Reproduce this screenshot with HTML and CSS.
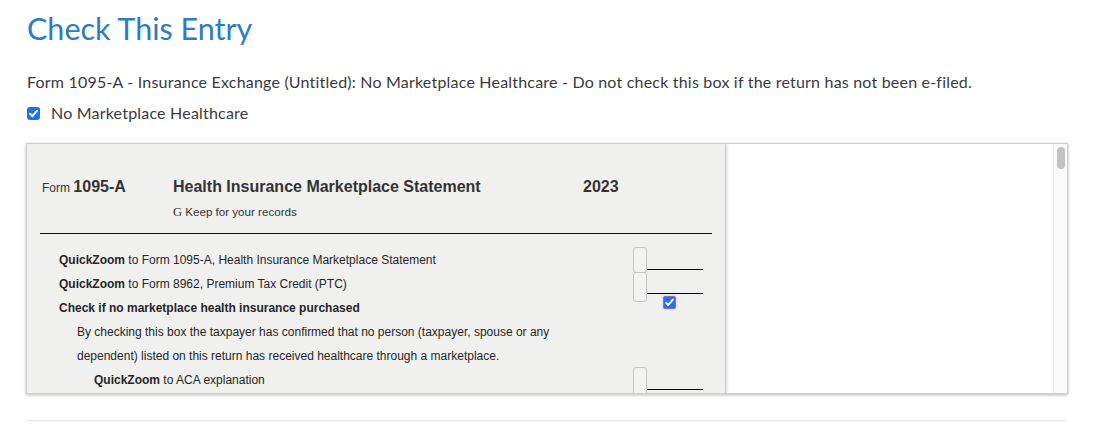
FILE: index.html
```html
<!DOCTYPE html>
<html>
<head>
<meta charset="utf-8">
<link rel="stylesheet" href="styles.css">
</head>
<body>
<div class="page">
  <h1 class="title">Check This Entry</h1>
  <p class="desc">Form 1095-A - Insurance Exchange (Untitled): No Marketplace Healthcare - Do not check this box if the return has not been e-filed.</p>
  <label class="check-line">
    <span class="cb"><svg viewBox="0 0 13 13" width="13" height="13"><path d="M3 6.8 L5.4 9.2 L10 3.8" fill="none" stroke="#fff" stroke-width="2" stroke-linecap="round" stroke-linejoin="round"/></svg></span>
    <span>No Marketplace Healthcare</span>
  </label>

  <div class="panel">
    <div class="form-pane">
      <div class="form-head">
        <div class="form-id"><span class="form-word">Form</span> <b>1095-A</b></div>
        <div class="form-title">
          <div class="form-name">Health Insurance Marketplace Statement</div>
          <div class="form-keep"><span class="g">G</span> Keep for your records</div>
        </div>
        <div class="form-year">2023</div>
      </div>
      <div class="rule"></div>
      <div class="rows">
        <div class="row">
          <div class="label"><b>QuickZoom</b> to Form 1095-A, Health Insurance Marketplace Statement</div>
          <div class="field"><span class="box box-a"></span><span class="line"></span></div>
        </div>
        <div class="row">
          <div class="label"><b>QuickZoom</b> to Form 8962, Premium Tax Credit (PTC)</div>
          <div class="field"><span class="box box-b"></span><span class="line"></span></div>
        </div>
        <div class="row">
          <div class="label"><b>Check if no marketplace health insurance purchased</b></div>
          <div class="field"><span class="fcb"><svg viewBox="0 0 13 13" width="11" height="11"><path d="M2.5 7 L5 9.5 L10.5 3" fill="none" stroke="#fff" stroke-width="2.2" stroke-linecap="round" stroke-linejoin="round"/></svg></span></div>
        </div>
        <div class="row">
          <div class="label indent1">By checking this box the taxpayer has confirmed that no person (taxpayer, spouse or any</div>
          <div class="field"></div>
        </div>
        <div class="row">
          <div class="label indent1">dependent) listed on this return has received healthcare through a marketplace.</div>
          <div class="field"></div>
        </div>
        <div class="row">
          <div class="label indent2"><b>QuickZoom</b> to ACA explanation</div>
          <div class="field"><span class="box box-c"></span><span class="line"></span></div>
        </div>
      </div>
    </div>
    <div class="side-pane">
      <div class="side-content"></div>
      <div class="scrollbar"><div class="thumb"></div></div>
    </div>
  </div>
  <div class="bottom-rule"></div>
</div>
</body>
</html>
```

FILE: styles.css
```css
* { box-sizing: border-box; }
html, body { margin: 0; padding: 0; background: #fff; }
body {
  font-family: Lato, "Open Sans", sans-serif;
  color: #393a3d;
}
.page {
  padding: 9px 28px 0 27px;
  width: 1096px;
  height: 426px;
  overflow: hidden;
}
.title {
  margin: 0;
  font-weight: 400;
  font-size: 30.5px;
  line-height: 38px;
  color: #2d7cc0;
}
.desc {
  margin: 25px 0 0 0;
  font-size: 16px;
  line-height: 20px;
  letter-spacing: 0.2px;
}
.check-line {
  display: flex;
  align-items: center;
  gap: 11px;
  margin-top: 11px;
  font-size: 16px;
  line-height: 20px;
  letter-spacing: 0.2px;
}
.cb {
  width: 13px;
  height: 13px;
  border-radius: 3px;
  background: #1a73e8;
  display: flex;
  align-items: center;
  justify-content: center;
}
.cb svg { display: block; }

.panel {
  margin-top: 20px;
  margin-left: -1px;
  width: 1042px;
  height: 251px;
  border: 1px solid #cfcfcf;
  box-shadow: 0 1px 3px rgba(0,0,0,0.28);
  display: flex;
  overflow: hidden;
}
.form-pane {
  width: 698px;
  flex: none;
  background: #f0f0ef;
  font-family: "Liberation Sans", Arial, sans-serif;
  color: #222;
  position: relative;
  box-shadow: 1px 0 0 #c9c9c9, 2px 0 3px rgba(0,0,0,0.15);
  z-index: 1;
}
.form-head {
  display: flex;
  align-items: flex-start;
  padding: 34px 0 0 15px;
  height: 89px;
}
.form-id {
  width: 131px;
  font-size: 12px;
  line-height: 18px;
  color: #333;
}
.form-id b { font-size: 16px; }
.form-title { width: 410px; }
.form-name {
  font-size: 16px;
  font-weight: 700;
  line-height: 18px;
  color: #333;
}
.form-keep {
  margin-top: 10px;
  font-size: 11.6px;
  line-height: 12px;
  color: #333;
}
.form-keep .g { font-family: "Liberation Serif", serif; font-size: 12.5px; }
.form-year {
  font-size: 16px;
  font-weight: 700;
  line-height: 18px;
  color: #333;
}
.rule {
  margin-left: 13px;
  width: 672px;
  height: 1px;
  background: #111;
}
.rows {
  padding-top: 14px;
}
.row {
  display: flex;
  height: 24px;
  align-items: center;
}
.label {
  width: 606px;
  padding-left: 32px;
  font-size: 12px;
  line-height: 14px;
  color: #262626;
  white-space: nowrap;
}
.label.indent1 { padding-left: 50px; }
.label.indent2 { padding-left: 67px; }
.field {
  position: relative;
  width: 70px;
  height: 24px;
}
.box {
  position: absolute;
  left: 0;
  width: 14px;
  border: 1px solid #c4c4c4;
  border-radius: 3px;
  background: #f3f3f2;
}
.box-a { top: -1px; height: 26px; }
.box-b { top: 0; height: 30px; }
.box-c { top: -1px; height: 30px; }
.line {
  position: absolute;
  left: 14px;
  top: 21px;
  width: 56px;
  height: 1px;
  background: #000;
}
.fcb {
  position: absolute;
  left: 30px;
  top: 0;
  width: 13px;
  height: 13px;
  background: #2a6fe0;
  border: 1px solid #8a73c9;
  border-radius: 2px;
  display: flex;
  align-items: center;
  justify-content: center;
  box-shadow: 0 0 2px rgba(90,120,255,0.5);
}
.fcb svg { display: block; }

.side-pane {
  flex: 1;
  display: flex;
  background: #fff;
  margin-left: 2px;
}
.side-content { flex: 1; }
.scrollbar {
  width: 14px;
  background: #fafafa;
  border-left: 1px solid #e8e8e8;
  padding: 3px 0 0 3px;
}
.thumb {
  width: 8px;
  height: 22px;
  border-radius: 4px;
  background: #c2c2c2;
}
.bottom-rule {
  margin-top: 26px;
  width: 1039px;
  height: 1px;
  background: #e6e6e6;
}
```
